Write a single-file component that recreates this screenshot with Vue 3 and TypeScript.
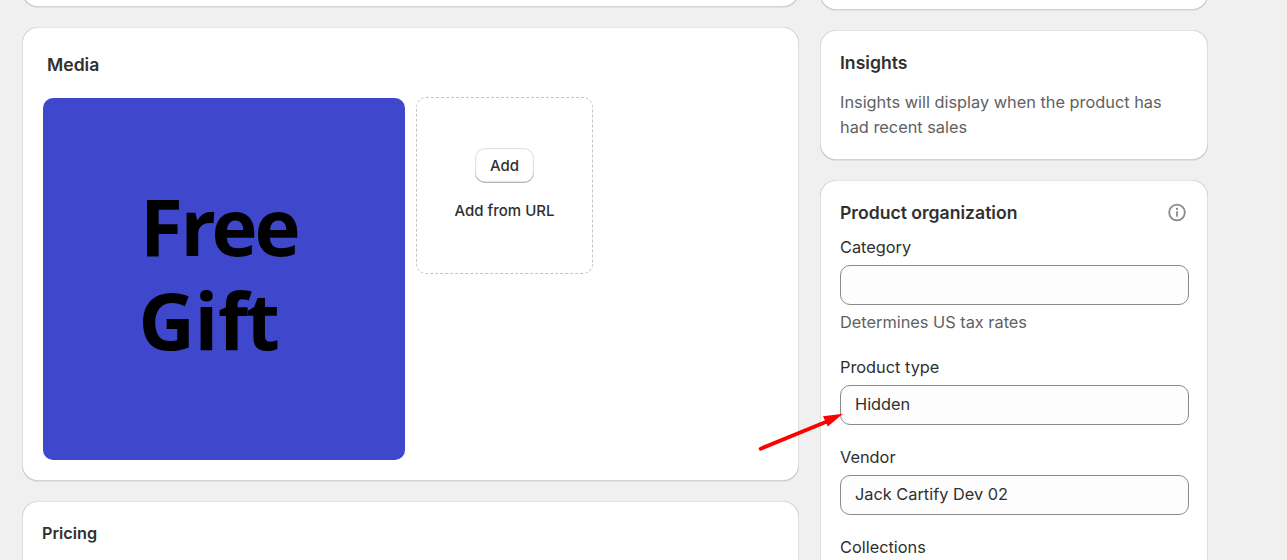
<template>
  <div class="product-page">
    <main class="main-column">
      <section class="card previous-card"></section>

      <section class="card media-card">
        <h2>Media</h2>
        <div class="media-list">
          <svg class="media-image" viewBox="0 0 362 362" role="img" aria-label="Free Gift">
            <rect width="362" height="362" fill="#3f48cc" />
            <text x="97 137.5 168.5 211.5" y="158">Free</text>
            <text x="95.5 151.5 175 203" y="252">Gift</text>
          </svg>
          <div class="upload-box">
            <button class="add-btn" type="button">Add</button>
            <span class="url-link">Add from URL</span>
          </div>
        </div>
      </section>

      <section class="card pricing-card">
        <h3>Pricing</h3>
      </section>
    </main>

    <aside class="side-column">
      <section class="card previous-card"></section>

      <section class="card insights-card">
        <h2>Insights</h2>
        <p>Insights will display when the product has had recent sales</p>
      </section>

      <section class="card organization-card">
        <div class="card-header">
          <h2>Product organization</h2>
          <svg class="info-icon" viewBox="0 0 20 20">
            <circle cx="10" cy="9.5" r="7.8" fill="none" stroke="#8a8a8a" stroke-width="1.8" />
            <circle cx="10" cy="5.9" r="1.15" fill="#8a8a8a" />
            <path d="M10 8.9v4.2" stroke="#8a8a8a" stroke-width="1.8" stroke-linecap="round" />
          </svg>
        </div>
        <div v-for="field in fields" :key="field.label" class="field">
          <label :for="field.id">{{ field.label }}</label>
          <input :id="field.id" v-model="field.value" type="text" />
          <span v-if="field.help" class="help-text">{{ field.help }}</span>
        </div>
        <div class="field">
          <label>Collections</label>
        </div>
      </section>
    </aside>

    <!-- points at the product type field -->
    <svg class="arrow" viewBox="0 0 90 44">
      <path d="M5.7 38.7L72 11.5" stroke="#ff0000" stroke-width="3.8" stroke-linecap="round" />
      <path d="M88 3.8L68 6.2L72.8 16.6Z" stroke="none" fill="#ff0000" />
    </svg>
  </div>
</template>

<script setup lang="ts">
import { ref } from 'vue'

interface Field {
  id: string
  label: string
  value: string
  help?: string
}

const fields = ref<Field[]>([
  { id: 'category', label: 'Category', value: '', help: 'Determines US tax rates' },
  { id: 'type', label: 'Product type', value: 'Hidden' },
  { id: 'vendor', label: 'Vendor', value: 'Jack Cartify Dev 02' }
])
</script>

<style>
body {
  margin: 0;
  overflow: hidden;
}
</style>

<style scoped>
.product-page {
  position: relative;
  box-sizing: border-box;
  display: grid;
  grid-template-columns: 777px 388px;
  column-gap: 21px;
  height: 560px;
  padding-left: 22px;
  overflow: hidden;
  background: #f0f0f0;
  color: #303030;
  font-family: Inter, 'Liberation Sans', sans-serif;
  font-size: 16.34px;
  line-height: 25px;
}

.main-column,
.side-column {
  display: flex;
  flex-direction: column;
  gap: 20px;
}

.card {
  box-sizing: border-box;
  flex-shrink: 0;
  background: #fff;
  border-radius: 16px;
  box-shadow:
    0 1px 0 rgba(26, 26, 26, 0.07),
    inset 1px 0 0 rgba(0, 0, 0, 0.13),
    inset -1px 0 0 rgba(0, 0, 0, 0.13),
    inset 0 -1px 0 rgba(0, 0, 0, 0.17),
    inset 0 1px 0 rgba(204, 204, 204, 0.5);
}

h2,
h3 {
  margin: 0;
  font-size: 17.6px;
  font-weight: 600;
  line-height: 25px;
}

h3 {
  font-size: 16.25px;
}

.previous-card {
  height: 40px;
  margin-top: -33px;
}

.side-column .previous-card {
  margin-top: -30px;
}

.media-card {
  height: 454px;
  padding: 25px 21px 0;

  h2 {
    padding-left: 4px;
  }
}

.media-list {
  display: flex;
  align-items: flex-start;
  gap: 11px;
  margin-top: 20px;
}

.media-image {
  width: 362px;
  height: 362px;
  margin-top: 1px;
  border-radius: 10px;

  text {
    font-family: 'Open Sans', 'Noto Sans', sans-serif;
    font-size: 78px;
    font-weight: 700;
    fill: #000;
  }
}

.upload-box {
  box-sizing: border-box;
  display: flex;
  flex-direction: column;
  align-items: center;
  width: 177px;
  height: 177px;
  padding-top: 50px;
  border: 1px dashed #c4c4c4;
  border-radius: 10px;
  font-size: 15px;
  font-weight: 500;
}

.add-btn {
  width: 59px;
  height: 35px;
  padding: 0;
  border: none;
  border-radius: 10px;
  background: #fff;
  box-shadow:
    inset 0 -1.25px 0 #b5b5b5,
    inset 0 0 0 1.25px #e3e3e3;
  color: #303030;
  font: inherit;
}

.url-link {
  margin-top: 15px;
}

.pricing-card {
  height: 120px;
  padding: 20px;
}

.insights-card {
  height: 130px;
  padding: 20px;

  p {
    margin: 15px 0 0;
    color: #616161;
  }
}

.organization-card {
  height: 480px;
  padding: 20px;
}

.card-header {
  display: flex;
  align-items: center;
  justify-content: space-between;
  margin-bottom: 10px;
}

.info-icon {
  width: 20px;
  height: 20px;
  margin-right: 1.5px;
}

.field {
  display: flex;
  flex-direction: column;
  margin-bottom: 20px;

  input {
    box-sizing: border-box;
    width: 349px;
    height: 40px;
    margin-top: 5px;
    padding: 0 14px 2px;
    border: 1px solid #8a8a8a;
    border-radius: 10px;
    background: #fdfdfd;
    color: #303030;
    font: inherit;
    outline: none;
  }
}

.help-text {
  margin-top: 5px;
  color: #616161;
}

.arrow {
  position: absolute;
  top: 410px;
  left: 755px;
  width: 90px;
  height: 44px;
  pointer-events: none;
}
</style>
